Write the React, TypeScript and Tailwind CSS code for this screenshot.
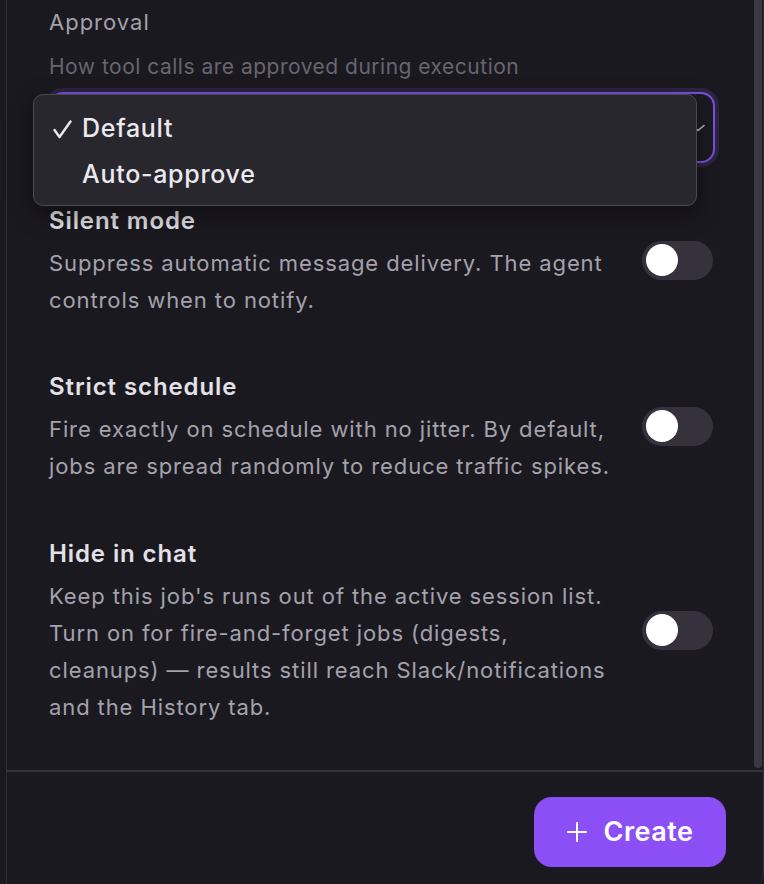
import React from "react";

function Toggle() {
  return (
    <div className="w-[71px] h-[39px] shrink-0 rounded-full bg-[#35323e] flex items-center px-[4px] mr-[2px] mb-[6px]">
      <div className="w-[32px] h-[32px] rounded-full bg-white" />
    </div>
  );
}

function Row({ title, lines, className }: { title: string; lines: string[]; className: string }) {
  return (
    <div className={`flex items-center justify-between ${className}`}>
      <div>
        <div className="text-[24px] leading-[28px] font-semibold tracking-[0.9px] text-[#e3e1e7]">{title}</div>
        <div className="mt-[10px] text-[22px] leading-[37px] tracking-[0.9px] text-[#a4a2ac] whitespace-nowrap">
          {lines.map((l, i) => (
            <div key={i}>{l}</div>
          ))}
        </div>
      </div>
      <Toggle />
    </div>
  );
}

export default function App() {
  return (
    <div className="w-[764px] h-[884px] bg-[#1b1920] flex overflow-hidden font-['Inter',sans-serif]">
      <div className="ml-[6px] flex-1 flex flex-col border-l border-r border-[#2f2d36] rounded-br-[10px]">
        <div className="h-[770px] flex">
          <div className="flex-1 pl-[42px] pr-[39px] pt-[8px]">
            <div className="text-[22px] leading-[28px] tracking-[1px] text-[#a3a1aa]">Approval</div>
            <div className="mt-[17px] text-[21px] leading-[28px] tracking-[0.5px] text-[#67656f]">
              How tool calls are approved during execution
            </div>
            <div className="relative mt-[11px]">
              <div className="h-[71px] rounded-[14px] border-2 border-[#7c4fe3] ring-4 ring-[#2c2540] bg-[#1d1b22] flex items-center justify-end pr-[8px]">
                <svg width="14" height="8" viewBox="0 0 14 8" fill="none">
                  <path d="M1 1.5 L7 6.5 L13 1.5" stroke="#c9c7cd" strokeWidth="1.6" strokeLinecap="round" strokeLinejoin="round" />
                </svg>
              </div>
              <div className="absolute left-[-16px] top-[2px] w-[664px] rounded-[10px] border border-[#4b4952] bg-[#29272e] pt-[11px] pb-[7px] shadow-[0_8px_24px_rgba(0,0,0,0.45)]">
                <div className="h-[46px] flex items-center pl-[19px] text-[25px] font-medium tracking-[0.7px] text-[#ebe9ef]">
                  <div className="w-[29px] flex items-center">
                    <svg width="19" height="19" viewBox="0 0 19 19" fill="none">
                      <path d="M1.5 10 L6.5 17 L17.5 1.5" stroke="#ebe9ef" strokeWidth="2.4" strokeLinecap="round" strokeLinejoin="round" />
                    </svg>
                  </div>
                  <span>Default</span>
                </div>
                <div className="h-[46px] flex items-center pl-[48px] text-[25px] font-medium tracking-[0.7px] text-[#ebe9ef]">
                  Auto-approve
                </div>
              </div>
            </div>
            <Row
              className="mt-[44px]"
              title="Silent mode"
              lines={["Suppress automatic message delivery. The agent", "controls when to notify."]}
            />
            <Row
              className="mt-[54px]"
              title="Strict schedule"
              lines={[
                "Fire exactly on schedule with no jitter. By default,",
                "jobs are spread randomly to reduce traffic spikes.",
              ]}
            />
            <Row
              className="mt-[55px]"
              title="Hide in chat"
              lines={[
                "Keep this job's runs out of the active session list.",
                "Turn on for fire-and-forget jobs (digests,",
                "cleanups) — results still reach Slack/notifications",
                "and the History tab.",
              ]}
            />
          </div>
          <div className="w-[9px] flex flex-col">
            <div className="w-[8px] h-[768px] bg-[#3a3842] rounded-b-[4px]" />
          </div>
        </div>
        <div className="flex-1 border-t-2 border-[#35333c] flex justify-end items-start pt-[25px] pr-[37px]">
          <button className="w-[192px] h-[70px] rounded-[18px] bg-[#8b4ff5] flex items-center justify-center gap-[17px] text-white text-[27px] font-semibold tracking-[0.5px]">
            <svg width="20" height="20" viewBox="0 0 20 20" fill="none">
              <path d="M10 1 V19 M1 10 H19" stroke="white" strokeWidth="2" strokeLinecap="round" />
            </svg>
            <span>Create</span>
          </button>
        </div>
      </div>
    </div>
  );
}
